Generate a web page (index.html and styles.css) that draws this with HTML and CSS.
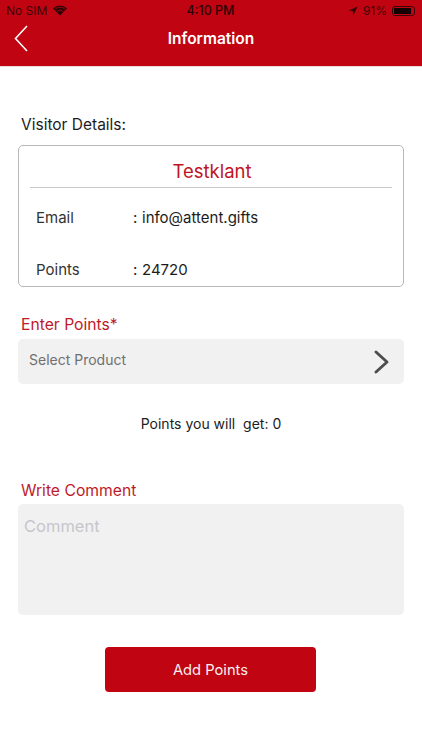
FILE: index.html
```html
<!DOCTYPE html>
<html lang="en">
<head>
  <meta charset="UTF-8" />
  <meta name="viewport" content="width=device-width, initial-scale=1.0" />
  <title>Information</title>
  <link rel="stylesheet" href="styles.css">
</head>
<body>
  <header class="top">
    <!-- iOS status bar -->
    <div class="status">
      <div class="status-side">
        <span>No SIM</span>
        <svg class="wifi" width="14" height="11" viewBox="0 0 14 11">
          <path d="M7 10.6 L0 3.4 A10 10 0 0 1 14 3.4 Z" fill="#2e0306"/>
          <path d="M2.2 4 A7 7 0 0 1 11.8 4" fill="none" stroke="#c10412" stroke-width="0.8"/>
          <path d="M4.2 6.4 A4 4 0 0 1 9.8 6.4" fill="none" stroke="#c10412" stroke-width="0.8"/>
        </svg>
      </div>
      <div class="status-time">4:10 PM</div>
      <div class="status-side status-right">
        <svg width="10" height="10" viewBox="0 0 10 10">
          <path d="M9.6 0.4 L0.6 4.6 L4.8 5.2 L5.4 9.6 Z" fill="#3a0508"/>
        </svg>
        <span>91%</span>
        <span class="battery"><span class="battery-fill"></span></span>
      </div>
    </div>
    <div class="nav">
      <svg class="back" width="14" height="27" viewBox="0 0 14 27">
        <path d="M13 1 L1.5 13.5 L13 26" fill="none" stroke="#fff" stroke-width="1.6"/>
      </svg>
      <h1>Information</h1>
    </div>
  </header>

  <main class="content">
    <p class="label-dark">Visitor Details:</p>
    <section class="card">
      <h2>Testklant</h2>
      <div class="card-row row-email">
        <span class="row-key">Email</span>
        <span class="row-colon">:</span>
        <span>info@attent.gifts</span>
      </div>
      <div class="card-row row-points">
        <span class="row-key">Points</span>
        <span class="row-colon">:</span>
        <span>24720</span>
      </div>
    </section>

    <p class="label-red label-points">Enter Points*</p>
    <div class="select">
      <span class="select-text">Select Product</span>
      <svg width="15" height="24" viewBox="0 0 15 24">
        <path d="M2 2 L13 12 L2 22" fill="none" stroke="#4d4d4d" stroke-width="2.9" stroke-linecap="round" stroke-linejoin="round"/>
      </svg>
    </div>

    <p class="points-get">Points you will&nbsp; get: 0</p>

    <p class="label-red label-comment">Write Comment</p>
    <div class="comment">Comment</div>

    <button class="add-btn">Add Points</button>
  </main>
</body>
</html>
```

FILE: styles.css
```css
body {
  margin: 0;
  background: #fff;
  font-family: 'Inter', 'Liberation Sans', sans-serif;
  color: #1c1c1c;
}

p, h1, h2 {
  margin: 0;
  font-weight: 400;
}

/* Header */
.top {
  height: 66px;
  background: #c10412;
  border-bottom: 1px solid #eddcdc;
}

.status {
  height: 21px;
  padding: 0 7px 0 6px;
  display: grid;
  grid-template-columns: 1fr auto 1fr;
  align-items: center;
  font-size: 12px;
  color: #3a0508;
}

.status-side {
  display: flex;
  align-items: center;
  gap: 6px;
}

.status-right {
  justify-content: flex-end;
  gap: 5px;
}

.status-time {
  font-size: 12.5px;
  font-weight: 500;
  color: #2e0306;
}

.battery {
  width: 23px;
  height: 10px;
  padding: 1px;
  border: 1px solid #3a0508;
  border-radius: 3px;
  display: block;
  box-sizing: border-box;
}

.battery-fill {
  display: block;
  width: 91%;
  height: 100%;
  background: #140102;
}

.nav {
  position: relative;
  height: 34px;
  display: flex;
  align-items: center;
  justify-content: center;
}

.nav h1 {
  font-size: 15.5px;
  font-weight: 600;
  color: #fff;
}

.back {
  position: absolute;
  left: 14px;
  top: 4px;
}

/* Content */
.content {
  padding: 48px 18px 0;
  display: flex;
  flex-direction: column;
}

.label-dark {
  margin-left: 3px;
  font-size: 15.5px;
  line-height: 20px;
}

.card {
  margin-top: 10px;
  height: 142px;
  box-sizing: border-box;
  padding: 0 11px;
  border: 1px solid #b8b8b8;
  border-radius: 5px;
  overflow: hidden;
}

.card h2 {
  height: 41px;
  line-height: 51px;
  padding-left: 2px;
  text-align: center;
  font-size: 18.5px;
  color: #c01424;
  border-bottom: 1px solid #c8c8c8;
}

.card-row {
  display: flex;
  padding-left: 6px;
  font-size: 15px;
  line-height: 20px;
}

.row-email {
  margin-top: 20px;
}

.row-points {
  margin-top: 32px;
}

.row-key {
  width: 97px;
  color: #333;
}

.row-colon {
  width: 9px;
}

.label-red {
  margin-left: 3px;
  font-size: 15.7px;
  line-height: 20px;
  color: #be1a28;
}

.label-points {
  margin-top: 28px;
}

.select {
  margin-top: 4px;
  height: 45px;
  padding: 0 15px 0 11px;
  background: #f1f1f1;
  border-radius: 5px;
  display: flex;
  align-items: center;
  justify-content: space-between;
  font-size: 14px;
  color: #707070;
}

.select-text {
  margin-bottom: 4px;
}

.points-get {
  margin-top: 30px;
  text-align: center;
  font-size: 14px;
  line-height: 20px;
}

.label-comment {
  margin-top: 47px;
}

.comment {
  margin-top: 3px;
  height: 111px;
  box-sizing: border-box;
  padding: 12px 6px;
  background: #f1f1f1;
  border-radius: 5px;
  font-size: 16.5px;
  line-height: 20px;
  color: #c6c6cb;
}

.add-btn {
  align-self: center;
  margin-top: 32px;
  margin-right: 1px;
  width: 211px;
  height: 45px;
  border: 0;
  border-radius: 4px;
  background: #c10412;
  color: #f5f0f0;
  font-family: inherit;
  font-size: 14.7px;
}
```
